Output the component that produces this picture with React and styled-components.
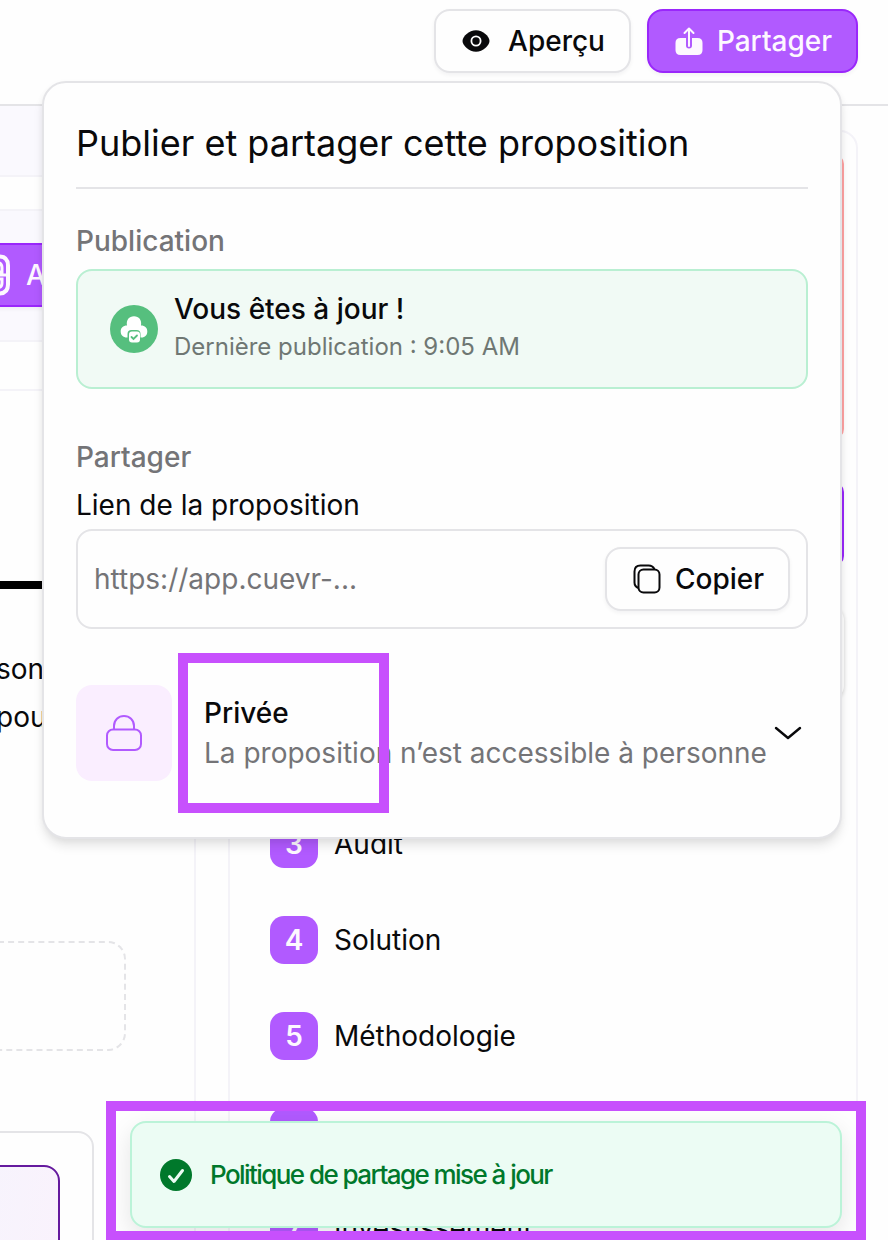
import React from 'react';
import styled, { createGlobalStyle } from 'styled-components';

const ink = '#09090b';
const muted = '#747477';
const line = '#e4e4e7';
const faint = '#f4f3f8';
const purple = '#b15aff';
const purpleDark = '#9a27fb';
const highlight = '#c750fd';

const GlobalStyle = createGlobalStyle`
  * {
    box-sizing: border-box;
  }

  body {
    margin: 0;
    background: #fefefe;
    color: ${ink};
    font-family: Inter, 'Liberation Sans', sans-serif;
    font-size: 28px;
  }
`;

const Page = styled.div`
  position: relative;
  display: flex;
  flex-direction: column;
  width: 888px;
  height: 1240px;
  overflow: hidden;
`;

const Header = styled.header`
  display: flex;
  flex: none;
  justify-content: flex-end;
  gap: 16px;
  height: 106px;
  padding: 9px 30px 0;
  border-bottom: 2px solid ${line};
`;

const Button = styled.button`
  display: flex;
  align-items: center;
  justify-content: center;
  gap: ${(props) => props.$gap || 14}px;
  flex: none;
  width: ${(props) => props.$width}px;
  height: 64px;
  padding: 0 0 0 2px;
  border: 2px solid ${(props) => (props.$primary ? purpleDark : line)};
  border-radius: 16px;
  background: ${(props) => (props.$primary ? purple : '#fefefe')};
  box-shadow: 0 2px 4px rgba(24, 10, 40, 0.05);
  color: ${(props) => (props.$primary ? '#fdf8ff' : ink)};
  font: 500 28px Inter, sans-serif;
  white-space: nowrap;
`;

const Content = styled.main`
  display: grid;
  grid-template-columns: 196px 630px;
  gap: 32px;
  flex: 1;
  min-height: 0;
`;

const Editor = styled.section`
  display: flex;
  flex-direction: column;
  min-width: 0;
  border-right: 2px solid ${faint};
  overflow: hidden;
`;

const Toolbar = styled.div`
  flex: none;
  height: 71px;
  background: #faf9fe;
  border-bottom: 2px solid ${faint};
`;

const ActionBar = styled.div`
  display: flex;
  align-items: center;
  flex: none;
  height: 133px;
  margin-top: 32px;
  padding-bottom: 2px;
  background: #faf9fe;
  border-top: 2px solid ${faint};
  border-bottom: 2px solid ${faint};
`;

const ActionButton = styled(Button)`
  justify-content: flex-start;
  margin-left: -28px;
  border-radius: 0;
`;

const Separator = styled.div`
  flex: none;
  height: 2px;
  margin-top: 47px;
  background: ${faint};
`;

const BlackRule = styled.div`
  flex: none;
  height: 8px;
  margin-top: 190px;
  background: #000;
`;

const Paragraph = styled.p`
  flex: none;
  margin: 56px 0 0 -4px;
  line-height: 48px;
  white-space: pre;
`;

const DropZone = styled.div`
  flex: none;
  width: 146px;
  height: 110px;
  margin: 200px 0 0 -20px;
  border: 2px dashed ${line};
  border-radius: 18px;
`;

const OfferCard = styled.div`
  flex: none;
  width: 124px;
  height: 160px;
  margin: 80px 0 0 -30px;
  padding: 32px;
  border: 2px solid ${line};
  border-radius: 16px;
`;

const OfferTier = styled.div`
  width: 90px;
  height: 140px;
  margin-left: -34px;
  border: 2px solid #651a9e;
  border-radius: 16px;
  background: linear-gradient(100deg, #f6f4fd, #faf2fc);
`;

const Outline = styled.aside`
  display: flex;
  flex-direction: column;
  height: 1200px;
  margin-top: 24px;
  padding: 24px 12px;
  border: 2px solid ${faint};
  border-radius: 18px;
`;

const Notice = styled.div`
  flex: none;
  height: 285px;
  margin-top: -2px;
  border: 2px solid #ffa2a2;
  border-radius: 10px;
`;

const OutlineAction = styled.div`
  flex: none;
  height: 84px;
  margin-top: 43px;
  border: 2px solid ${purpleDark};
  border-radius: 10px;
  background: ${purple};
`;

const OutlineBox = styled.div`
  flex: none;
  height: 90px;
  margin-top: 42px;
  border-radius: 12px;
  box-shadow: 0 1px 4px rgba(0, 0, 0, 0.16);
`;

const SectionList = styled.ol`
  display: flex;
  flex-direction: column;
  gap: 48px;
  margin: 122px 0 0;
  padding: 0 0 0 28px;
  list-style: none;
`;

const SectionItem = styled.li`
  display: flex;
  align-items: center;
  flex: none;
  gap: 16px;
  height: 48px;
`;

const SectionNumber = styled.span`
  display: flex;
  align-items: center;
  justify-content: center;
  width: 48px;
  height: 48px;
  border-radius: 14px;
  background: ${purple};
  color: #fdf8ff;
  font-weight: 600;
`;

const Popover = styled.div`
  position: absolute;
  top: 81px;
  left: 42px;
  display: flex;
  flex-direction: column;
  width: 800px;
  height: 758px;
  padding: 0 32px;
  border: 2px solid ${line};
  border-radius: 24px;
  background: #fefefe;
  box-shadow: 0 8px 12px -2px rgba(0, 0, 0, 0.11), 0 2px 6px rgba(0, 0, 0, 0.04);
`;

const Title = styled.h1`
  flex: none;
  height: 106px;
  margin: 0;
  border-bottom: 2px solid ${line};
  font-size: 36px;
  font-weight: 400;
  line-height: 120px;
  white-space: nowrap;
`;

const GroupLabel = styled.h2`
  margin: ${(props) => props.$top}px 0 0;
  color: ${muted};
  font-size: 28px;
  font-weight: 500;
  line-height: 40px;
`;

const Status = styled.div`
  display: flex;
  align-items: center;
  gap: 16px;
  height: 120px;
  margin-top: 8px;
  padding-left: 32px;
  border: 2px solid #b9efd2;
  border-radius: 16px;
  background: #f1faf5;
`;

const StatusIcon = styled.div`
  display: flex;
  align-items: center;
  justify-content: center;
  width: 48px;
  height: 48px;
  border-radius: 50%;
  background: #56bf7e;
`;

const StatusText = styled.div`
  padding-bottom: 5px;
`;

const StatusTitle = styled.div`
  font-weight: 500;
  line-height: 40px;
`;

const StatusDetail = styled.div`
  color: #6f7773;
  font-size: 24px;
  line-height: 35px;
`;

const FieldLabel = styled.div`
  margin-top: 8px;
  line-height: 40px;
`;

const LinkField = styled.div`
  display: flex;
  align-items: center;
  justify-content: space-between;
  height: 100px;
  margin-top: 4px;
  padding: 0 16px;
  border: 2px solid ${line};
  border-radius: 16px;
  color: ${muted};
`;

const Access = styled.div`
  display: flex;
  align-items: center;
  height: 96px;
  margin-top: 56px;
  padding-right: 6px;
`;

const AccessIcon = styled.div`
  display: flex;
  align-items: center;
  justify-content: center;
  flex: none;
  width: 96px;
  height: 96px;
  border-radius: 16px;
  background: #faeeff;
`;

const AccessText = styled.div`
  flex: 1;
  min-width: 0;
  padding-left: 32px;
  line-height: 40px;
  white-space: nowrap;
`;

const AccessTitle = styled.div`
  font-weight: 500;
`;

const AccessDetail = styled.div`
  color: ${muted};
`;

const Toast = styled.div`
  position: absolute;
  top: 1121px;
  left: 130px;
  display: flex;
  align-items: center;
  gap: 18px;
  width: 712px;
  height: 107px;
  padding-left: 28px;
  border: 2px solid #bbf3d8;
  border-radius: 16px;
  background: #ecfcf4;
  box-shadow: 0 8px 24px rgba(0, 0, 0, 0.1);
  color: #00782b;
  font-size: 26px;
  font-weight: 500;
  letter-spacing: -1.57px;
  white-space: nowrap;
`;

const Highlight = styled.div`
  position: absolute;
  top: ${(props) => props.$top}px;
  left: ${(props) => props.$left}px;
  width: ${(props) => props.$width}px;
  height: ${(props) => props.$height}px;
  border: 10px solid ${highlight};
  pointer-events: none;
`;

const EyeIcon = () => (
  <svg width="28" height="24" viewBox="0 0 28 24">
    <path d="M.5 12C.5 7.500 7 1.300 14 1.300S27.500 7.500 27.500 12 21 22.700 14 22.700.5 16.500.5 12Z" fill={ink} />
    <circle cx="14" cy="12" r="4.600" fill="none" stroke="#fefefe" strokeWidth="1.800" />
    <circle cx="14" cy="12" r="1.300" fill={ink} />
  </svg>
);

const ShareIcon = () => (
  <svg width="28" height="30" viewBox="0 0 28 30">
    <path d="M5.500 12H22.500Q27.500 12 27.500 17V24Q27.500 29 22.500 29H5.500Q.5 29 .5 24V17Q.5 12 5.500 12Z" fill="#fdf8ff" />
    <path d="M14 4V19.500" stroke={purple} strokeWidth="6" strokeLinecap="round" />
    <path d="M14 3V20M9.500 7 14 2.500 18.500 7" fill="none" stroke="#fdf8ff" strokeWidth="2" strokeLinecap="round" strokeLinejoin="round" />
  </svg>
);

const AssistantIcon = () => (
  <svg width="34" height="42" viewBox="0 0 34 42">
    <path d="M17 2.500H23Q32 2.500 32 11.500V30.500Q32 39.500 23 39.500H17" fill="none" stroke="#fdf8ff" strokeWidth="4" />
    <path d="M19 8Q26 8 26 14V18H18M32 21H18M18 25H26V29Q26 34 20 34" fill="none" stroke="#fdf8ff" strokeWidth="3" />
  </svg>
);

const CloudCheckIcon = () => (
  <svg width="28" height="28" viewBox="0 0 28 28">
    <path d="M7 10.500C6 5 9 1.200 14 1.200S22 5 21 10.500C25 10.500 27.300 13 27.300 16.500S25 22.500 21.500 22.500H7C3 22.500.7 20 .7 16.500S3 10.500 7 10.500Z" fill="#fff" />
    <rect x="7.500" y="15" width="13" height="13" rx="4" fill="#56bf7e" />
    <rect x="9" y="16.500" width="11" height="11" rx="3" fill="#fff" />
    <path d="M11.500 22 13.500 24 17 20.500" fill="none" stroke="#56bf7e" strokeWidth="1.800" strokeLinecap="round" />
  </svg>
);

const CopyIcon = () => (
  <svg width="28" height="30" viewBox="0 0 28 30">
    <path d="M5.500 24Q1.500 22.500 1.500 18.500V7.500Q1.500 1.500 7.500 1.500H15.500Q20 1.500 21.500 5.500" fill="none" stroke={ink} strokeWidth="2" />
    <rect x="5.500" y="5.500" width="21" height="23" rx="5" fill="none" stroke={ink} strokeWidth="2" />
  </svg>
);

const LockIcon = () => (
  <svg width="36" height="36" viewBox="0 0 36 36">
    <path d="M8 14V11C8 5 12.500 1 18 1S28 5 28 11V14" fill="none" stroke={purple} strokeWidth="2" />
    <rect x="1" y="14.500" width="34" height="20.500" rx="6" fill="none" stroke={purple} strokeWidth="2" />
  </svg>
);

const ChevronIcon = () => (
  <svg width="28" height="14" viewBox="0 0 28 14">
    <path d="M2 2 14 12 26 2" fill="none" stroke={ink} strokeWidth="2.400" strokeLinecap="round" strokeLinejoin="round" />
  </svg>
);

const CheckIcon = () => (
  <svg width="32" height="32" viewBox="0 0 32 32">
    <circle cx="16" cy="16" r="16" fill="#00782b" />
    <path d="M9.500 17.500 14 22.500 22.500 11.500" fill="none" stroke="#ecfcf4" strokeWidth="3" strokeLinecap="round" strokeLinejoin="round" />
  </svg>
);

const sections = [
  { number: 3, name: 'Audit' },
  { number: 4, name: 'Solution' },
  { number: 5, name: 'Méthodologie' },
  { number: 6, name: '' },
  { number: 7, name: 'Investissement' },
];

const SharePopover = () => (
  <Popover>
    <Title>Publier et partager cette proposition</Title>
    <GroupLabel $top={32}>Publication</GroupLabel>
    <Status>
      <StatusIcon><CloudCheckIcon /></StatusIcon>
      <StatusText>
        <StatusTitle>Vous êtes à jour !</StatusTitle>
        <StatusDetail>Dernière publication : 9:05 AM</StatusDetail>
      </StatusText>
    </Status>
    <GroupLabel $top={48}>Partager</GroupLabel>
    <FieldLabel>Lien de la proposition</FieldLabel>
    <LinkField>
      <span>https://app.cuevr-...</span>
      <Button $width={185}><CopyIcon />Copier</Button>
    </LinkField>
    <Access>
      <AccessIcon><LockIcon /></AccessIcon>
      <AccessText>
        <AccessTitle>Privée</AccessTitle>
        <AccessDetail>La proposition n’est accessible à personne</AccessDetail>
      </AccessText>
      <ChevronIcon />
    </Access>
  </Popover>
);

export default function App() {
  return (
    <Page>
      <GlobalStyle />
      <Header>
        <Button $width={197} $gap={18}><EyeIcon />Aperçu</Button>
        <Button $width={211} $primary><ShareIcon />Partager</Button>
      </Header>
      <Content>
        <Editor>
          <Toolbar />
          <ActionBar>
            <ActionButton $width={180} $gap={16} $primary><AssistantIcon />A</ActionButton>
          </ActionBar>
          <Separator />
          <BlackRule />
          <Paragraph>{'son\npou'}</Paragraph>
          <DropZone />
          <OfferCard><OfferTier /></OfferCard>
        </Editor>
        <Outline>
          <Notice />
          <OutlineAction />
          <OutlineBox />
          <SectionList>
            {sections.map((section) => (
              <SectionItem key={section.number}>
                <SectionNumber>{section.number}</SectionNumber>
                <span>{section.name}</span>
              </SectionItem>
            ))}
          </SectionList>
        </Outline>
      </Content>
      <SharePopover />
      <Toast><CheckIcon />Politique de partage mise à jour</Toast>
      <Highlight $top={653} $left={178} $width={211} $height={160} />
      <Highlight $top={1101} $left={106} $width={760} $height={140} />
    </Page>
  );
}
